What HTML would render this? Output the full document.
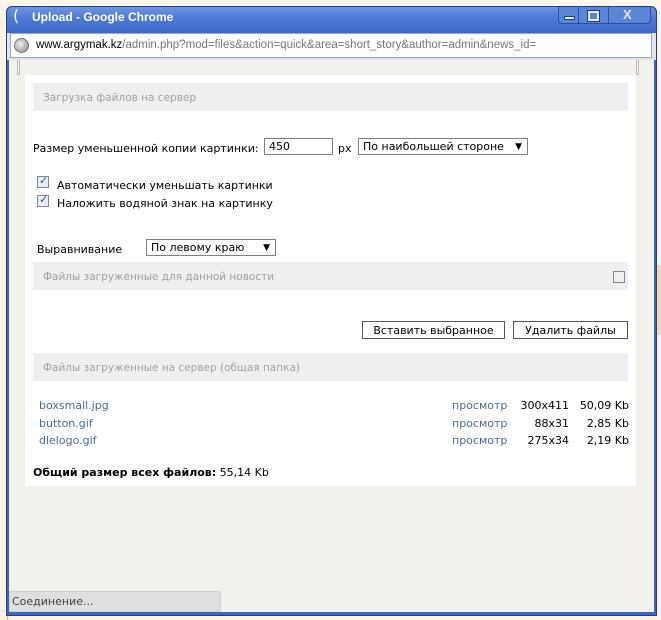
<!DOCTYPE html>
<html><head><meta charset="utf-8"><style>
*{margin:0;padding:0;box-sizing:border-box}
body{width:661px;height:620px;overflow:hidden;background:#fdf3e4;position:relative;font-family:"DejaVu Sans","Liberation Sans",sans-serif;font-size:11px;color:#000}
.a{position:absolute}
.t{position:absolute;white-space:nowrap;line-height:14px}
.c .t{margin-top:2px}
.hdr{position:absolute;left:33px;width:595px;height:28px;background:#efefef;color:#a0a0a0;padding:9px 10px;font-size:10.5px;line-height:12px}
.box{position:absolute;border:1px solid #7f7f7f;background:#fff;height:17px;line-height:16px;padding-left:4px}
.btn{position:absolute;border:1px solid #555;background:#fff;height:18px;line-height:17px;text-align:center}
.cb{position:absolute;width:12px;height:12px;border:1px solid #7a8a99;background:#e8eef3}
.lnk{color:#4a6a9c}
</style></head><body>
<div class="a" style="left:0;top:0;width:661px;height:6px;background:#fff6ea"></div>
<div class="a" style="left:0;top:265px;width:8px;height:355px;border-right:1px solid #f3b36a"></div>
<div class="a" style="left:656px;top:265px;width:5px;height:70px;background:#fbd4a4"></div>
<!-- window -->
<div class="a" style="left:6px;top:6px;width:651px;height:610px;background:#3a67c6;border-radius:6px 6px 0 0;border:1px solid #1e3f8e"></div>
<div class="a" style="left:7px;top:7px;width:649px;height:26px;border-radius:6px 6px 0 0;background:linear-gradient(#6d95e0,#4f7bd6 40%,#3e6acb)"></div>
<div class="t" style="left:13px;top:9px;color:#fff;font-size:16px">(</div>
<div class="t" style="left:32px;top:10px;color:#fff;font-weight:bold;font-size:12px;font-family:'Liberation Sans',sans-serif">Upload - Google Chrome</div>
<div class="a" style="left:558px;top:7px;width:93px;height:17px;border:1px solid #2a4f9e;border-top:none;border-radius:0 0 4px 4px;background:#5a86da"></div>
<div class="a" style="left:578px;top:7px;width:1px;height:17px;background:#2a4f9e"></div>
<div class="a" style="left:608px;top:7px;width:1px;height:17px;background:#2a4f9e"></div>
<div class="a" style="left:564px;top:16px;width:11px;height:4px;border:1px solid #1e3a7a;background:#e4ecfa;border-radius:1px"></div>
<div class="a" style="left:588px;top:11px;width:11px;height:10px;border:2px solid #e4ecfa;outline:1px solid #1e3a7a"></div>
<div class="t" style="left:623px;top:8px;color:#e4ecfa;font-weight:bold;font-size:13px;font-family:'Liberation Sans',sans-serif">X</div>
<!-- address -->
<div class="a" style="left:7px;top:33px;width:649px;height:27px;background:#dce4f0"></div>
<div class="a" style="left:10px;top:33px;width:642px;height:25px;background:#fff;border:1px solid #9aa8bc"></div>
<div class="a" style="left:14px;top:38px;width:15px;height:15px;border-radius:50%;background:radial-gradient(circle at 40% 40%,#eee,#888);border:1px solid #777"></div>
<div class="t" style="left:36px;top:38px;font-size:11.5px;font-family:'Liberation Sans',sans-serif;color:#000">www.argymak.kz<span style="color:#777">/admin.php?mod=files&amp;action=quick&amp;area=short_story&amp;author=admin&amp;news_id=</span></div>
<!-- content -->
<div class="a" style="left:9px;top:60px;width:645px;height:552px;background:#f3f1ec"></div>
<div class="a" style="left:17px;top:60px;width:3px;height:15px;border:1px solid #bbb;border-top:none"></div>
<div class="a" style="left:636px;top:60px;width:3px;height:15px;border:1px solid #bbb;border-top:none"></div>
<div class="c">
<div class="a" style="left:25px;top:75px;width:611px;height:411px;background:#fff"></div>
<div class="hdr" style="top:83px">Загрузка файлов на сервер</div>
<div class="t" style="left:33px;top:140px">Размер уменьшенной копии картинки:</div>
<div class="box" style="left:264px;top:138px;width:69px">450</div>
<div class="t" style="left:338px;top:140px">px</div>
<div class="box" style="left:358px;top:138px;width:170px">По наибольшей стороне <span style="position:absolute;right:5px;font-size:9px">▼</span></div>
<div class="cb" style="left:37px;top:176px"><span style="position:absolute;left:1px;top:-3px;color:#2a4fa0;font-size:11px;font-weight:bold">✓</span></div>
<div class="t" style="left:57px;top:177px">Автоматически уменьшать картинки</div>
<div class="cb" style="left:37px;top:195px"><span style="position:absolute;left:1px;top:-3px;color:#2a4fa0;font-size:11px;font-weight:bold">✓</span></div>
<div class="t" style="left:57px;top:195px">Наложить водяной знак на картинку</div>
<div class="t" style="left:37px;top:241px">Выравнивание</div>
<div class="box" style="left:146px;top:239px;width:130px">По левому краю <span style="position:absolute;right:5px;font-size:9px">▼</span></div>
<div class="hdr" style="top:262px">Файлы загруженные для данной новости</div>
<div class="a" style="left:613px;top:271px;width:12px;height:12px;border:1px solid #888;background:#f0f0f0"></div>
<div class="btn" style="left:362px;top:321px;width:143px">Вставить выбранное</div>
<div class="btn" style="left:513px;top:321px;width:115px">Удалить файлы</div>
<div class="hdr" style="top:353px">Файлы загруженные на сервер (общая папка)</div>
<div class="t lnk" style="left:39px;top:397px">boxsmall.jpg</div>
<div class="t lnk" style="left:39px;top:415px">button.gif</div>
<div class="t lnk" style="left:39px;top:432px">dlelogo.gif</div>
<div class="t lnk" style="left:452px;top:397px">просмотр</div>
<div class="t lnk" style="left:452px;top:415px">просмотр</div>
<div class="t lnk" style="left:452px;top:432px">просмотр</div>
<div class="t" style="left:500px;width:69px;text-align:right;top:397px">300x411</div>
<div class="t" style="left:500px;width:69px;text-align:right;top:415px">88x31</div>
<div class="t" style="left:500px;width:69px;text-align:right;top:432px">275x34</div>
<div class="t" style="left:570px;width:59px;text-align:right;top:397px">50,09 Kb</div>
<div class="t" style="left:570px;width:59px;text-align:right;top:415px">2,85 Kb</div>
<div class="t" style="left:570px;width:59px;text-align:right;top:432px">2,19 Kb</div>
<div class="t" style="left:33px;top:464px"><b>Общий размер всех файлов:</b> 55,14 Kb</div>
</div>
<!-- status -->
<div class="a" style="left:9px;top:591px;width:212px;height:21px;background:#dfdfdf;border:1px solid #cfcfcf;border-radius:0 3px 0 0"></div>
<div class="t" style="left:12px;top:595px;color:#444;font-size:11px">Соединение...</div>
</body></html>
